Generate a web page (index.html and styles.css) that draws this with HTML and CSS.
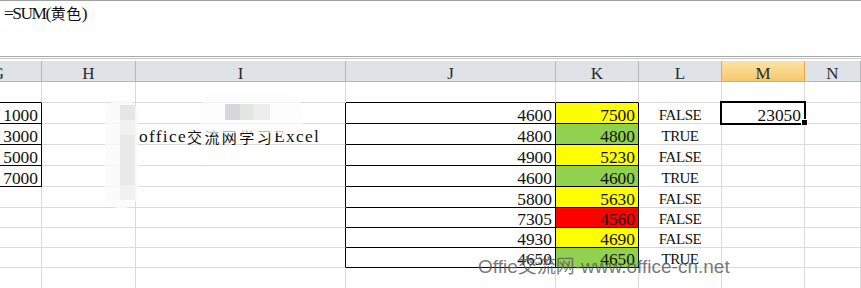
FILE: index.html
```html
<!DOCTYPE html>
<html lang="zh-CN">
<head>
    <meta charset="UTF-8">
    <meta name="viewport" content="width=device-width, initial-scale=1.0">
    <title>office交流网学习Excel</title>
    <link rel="stylesheet" href="styles.css">
</head>
<body>
    <div class="formula">=SUM(<span class="cjk">黄色</span>)</div>
    <div class="split"></div>

    <div class="sheet">
        <div class="row head">
            <div>G</div><div>H</div><div>I</div><div>J</div><div>K</div><div>L</div><div class="on">M</div><div>N</div>
        </div>
        <div class="row">
            <div class="bb"></div><div></div><div></div><div class="bb"></div><div class="bb"></div><div></div><div></div><div></div>
        </div>
        <div class="row">
            <div class="num br bb">1000</div><div></div><div class="br"></div>
            <div class="num br bb">4600</div><div class="num br bb yellow">7500</div>
            <div class="mid">FALSE</div><div class="num sel">23050</div><div></div>
        </div>
        <div class="row">
            <div class="num br bb">3000</div><div></div><div class="br txt">office<span class="cjk">交流网学习</span>Excel</div>
            <div class="num br bb">4800</div><div class="num br bb green">4800</div>
            <div class="mid t">TRUE</div><div></div><div></div>
        </div>
        <div class="row">
            <div class="num br bb">5000</div><div></div><div class="br"></div>
            <div class="num br bb">4900</div><div class="num br bb yellow">5230</div>
            <div class="mid">FALSE</div><div></div><div></div>
        </div>
        <div class="row">
            <div class="num br bb">7000</div><div></div><div class="br"></div>
            <div class="num br bb">4600</div><div class="num br bb green">4600</div>
            <div class="mid t">TRUE</div><div></div><div></div>
        </div>
        <div class="row">
            <div></div><div></div><div class="br"></div>
            <div class="num br bb">5800</div><div class="num br bb yellow">5630</div>
            <div class="mid">FALSE</div><div></div><div></div>
        </div>
        <div class="row short">
            <div></div><div></div><div class="br"></div>
            <div class="num br bb">7305</div><div class="num br bb red">4560</div>
            <div class="mid">FALSE</div><div></div><div></div>
        </div>
        <div class="row short">
            <div></div><div></div><div class="br"></div>
            <div class="num br bb">4930</div><div class="num br bb yellow">4690</div>
            <div class="mid">FALSE</div><div></div><div></div>
        </div>
        <div class="row short">
            <div></div><div></div><div class="br"></div>
            <div class="num br bb">4650</div><div class="num br bb green">4650</div>
            <div class="mid t">TRUE</div><div></div><div></div>
        </div>
        <div class="row">
            <div></div><div></div><div></div><div></div><div></div><div></div><div></div><div></div>
        </div>

        <!-- 모자이크 처리된 부분 -->
        <div class="blur b1">
            <div class="px p1"></div>
            <div class="px p2"></div>
            <div class="px p3"></div>
            <div class="px p4"></div>
        </div>
        <div class="blur b2">
            <div class="px p5"></div>
            <div class="px p6"></div>
            <div class="px p7"></div>
        </div>
    </div>

    <div class="mark">Offie交流网-www.office-cn.net</div>
</body>
</html>
```

FILE: styles.css
```css
body {
    margin: 0;
    width: 861px;
    height: 288px;
    overflow: hidden;
    position: relative;
    background: #fff;
    font-family: "Liberation Serif", serif;
    font-size: 17.4px;
    color: #111;
}

.cjk {
    font-family: "Noto Sans CJK SC", sans-serif;
    font-size: 15px;
    letter-spacing: 2.4px;
}

.formula {
    box-sizing: border-box;
    height: 57px;
    border-top: 1px solid #a0a0a0;
    border-bottom: 1px solid #a8a8a8;
    padding: 3px 0 0 4px;
    line-height: 18px;
    letter-spacing: -1.5px;
}
.formula .cjk {
    letter-spacing: 0.5px;
    margin-left: 1px;
}

.split {
    box-sizing: border-box;
    height: 3px;
    margin-top: 1px;
    border-top: 1px solid #c6c6c6;
}

.sheet {
    position: relative;
    margin-left: -45px;
}

.row {
    display: grid;
    grid-template-columns: 87px 94px 210px 210px 83px 83px 83px 56px;
    height: 21px;
}
.row.short {
    height: 20px;
}

.row > div {
    box-sizing: border-box;
    border-right: 1px solid #dadada;
    border-bottom: 1px solid #dadada;
    display: flex;
    align-items: flex-end;
    line-height: 15px;
    white-space: nowrap;
}

.head > div {
    background: #dfe3e8;
    border-right-color: #b3b8bd;
    border-bottom-color: #b3b8bd;
    justify-content: center;
    font-size: 17px;
    line-height: 15px;
    color: #2a2a2a;
}
.head > div.on {
    background: linear-gradient(#fbe3a6, #f6c96c);
    border-right-color: #eba64f;
    border-bottom-color: #eba64f;
    box-shadow: -1px 0 0 #eba64f;
}

.num {
    justify-content: flex-end;
    padding-right: 3px;
}
.mid {
    justify-content: center;
    font-size: 15px;
    letter-spacing: -0.4px;
}
.mid.t {
    letter-spacing: -0.6px;
}
.txt {
    padding-left: 3px;
    letter-spacing: 1.3px;
}
.txt .cjk {
    letter-spacing: 2.4px;
}

.row > .br {
    border-right-color: #000;
}
.row > .bb {
    border-bottom-color: #000;
}

.yellow { background: #ffff00; }
.green { background: #92d050; }
.red { background: #ff0000; }

.sel {
    position: relative;
}
.sel::after {
    content: "";
    position: absolute;
    top: -2px;
    left: -2px;
    right: -2px;
    bottom: -2px;
    border: 2px solid #000;
}
.sel::before {
    content: "";
    position: absolute;
    right: -4px;
    bottom: -3px;
    width: 5px;
    height: 5px;
    background: #000;
    border: 1px solid #fff;
    z-index: 1;
}

.blur {
    position: absolute;
    background: rgba(250, 250, 250, 0.85);
}
.b1 {
    left: 150px;
    top: 39px;
    width: 33px;
    height: 108px;
    border-radius: 14px;
}
.b2 {
    left: 245px;
    top: 32px;
    width: 103px;
    height: 40px;
    border-radius: 18px 18px 6px 6px;
    background: rgba(252, 252, 252, 0.7);
}

.px {
    position: absolute;
    width: 15px;
}
.p1 { left: 15px; top: 5px; height: 15px; background: #e6e6e6; }
.p2 { left: 15px; top: 20px; height: 15px; background: #f1f1f1; }
.p3 { left: 15px; top: 35px; height: 50px; background: #e9e9e9; }
.p4 { left: 15px; top: 85px; height: 15px; background: #f1f1f1; }
.p5 { left: 25px; top: 11px; height: 16px; background: #d7d7db; }
.p6 { left: 40px; top: 11px; width: 14px; height: 16px; background: #e3e6e3; }
.p7 { left: 54px; top: 11px; width: 16px; height: 16px; background: #ededed; }

.mark {
    position: absolute;
    left: 478px;
    top: 255px;
    font-family: "Liberation Sans", "Noto Sans CJK SC", sans-serif;
    font-size: 19px;
    line-height: 24px;
    color: rgba(95, 95, 95, 0.85);
}
```
